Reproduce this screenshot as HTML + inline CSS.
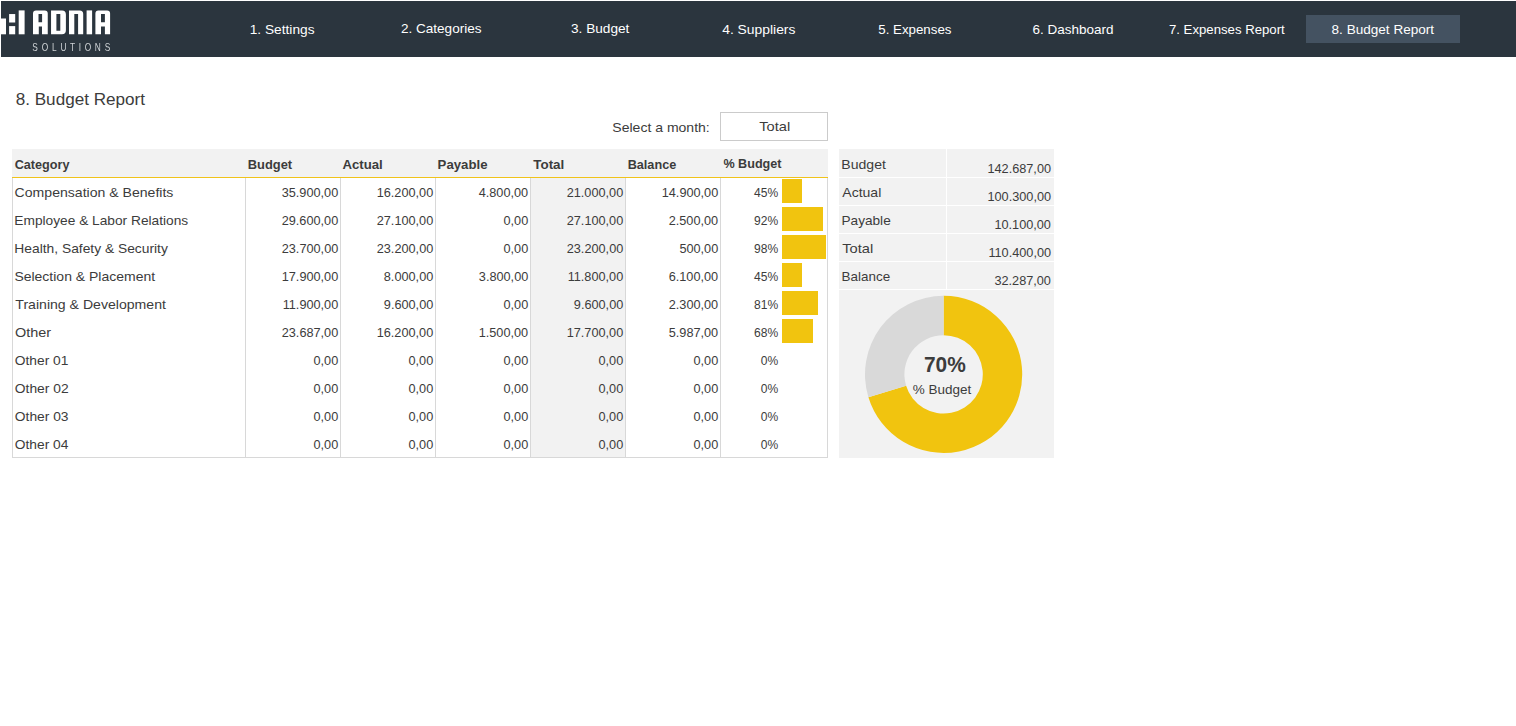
<!DOCTYPE html>
<html><head><meta charset="utf-8"><title>8. Budget Report</title>
<style>
html,body{margin:0;padding:0;background:#fff;}
body{width:1516px;height:726px;position:relative;overflow:hidden;font-family:"Liberation Sans",sans-serif;color:#3c3c3c;}
.b{position:absolute;}
.t{position:absolute;white-space:nowrap;line-height:1;}
.n{color:#fff;font-size:13.4px;}
.ti{font-size:16.8px;}
.x{font-size:13.4px;}
.x2{font-size:13.2px;}
.h{font-weight:bold;font-size:13.2px;}
.num{font-size:13.4px;}
.pct{font-size:13.4px;}
.big{font-weight:bold;font-size:22px;}
</style></head><body>
<div class="b" style="left:1px;top:1px;width:1515px;height:56px;background:#2b353e"></div>
<div class="b" style="left:1306px;top:15px;width:154px;height:28px;background:#445261"></div>
<svg class="b" style="left:0;top:0;will-change:transform" width="130" height="58" viewBox="0 0 130 58">
<g fill="#fff" fill-rule="evenodd">
<rect x="0" y="18.5" width="6" height="15.8"/>
<rect x="9.1" y="14.05" width="6.1" height="8.45"/>
<rect x="9.1" y="26.1" width="6.1" height="8.2"/>
<rect x="18.7" y="10.4" width="5.9" height="23.9"/>
<path d="M33 34.3V13.4Q33 10.4 36 10.4H44.75Q47.75 10.4 47.75 13.4V34.3H42V26.4H38.8V34.3ZM38.5 14.05H42.1V22.15H38.5Z"/>
<path d="M51.05 10.4H62Q65.9 10.4 65.9 14.4V30.3Q65.9 34.3 62 34.3H51.05ZM56.4 14.05H60.3V30.7H56.4Z"/>
<path d="M69 10.4H79.7Q83.2 10.4 83.2 13.9V34.3H78.1V14.05H74.3V34.3H69Z"/>
<rect x="86.6" y="10.4" width="5.5" height="23.9"/>
<path d="M95.4 34.3V13.4Q95.4 10.4 98.4 10.4H107.1Q110.1 10.4 110.1 13.4V34.3H104.9V26.5H101V34.3ZM101 14.05H104.9V22.15H101Z"/>
</g>
<g fill="#cfd3d6" font-family="Liberation Sans, sans-serif" font-size="11.6" text-anchor="middle" transform="scale(0.72 1)">
<text y="51" x="48.6 62.4 75.6 88.2 100.6 111 122.1 135.8 149.4">SOLUTIONS</text>
</g>
</svg>
<div class="b" style="left:720px;top:112px;width:106px;height:27px;border:1px solid #cbcbcb;background:#fff"></div>
<div class="b" style="left:12px;top:149px;width:816px;height:28px;background:#f2f2f2"></div>
<div class="b" style="left:531px;top:178px;width:94px;height:279px;background:#f2f2f2"></div>
<div class="b" style="left:12px;top:177px;width:816px;height:1px;background:#f0c31a"></div>
<div class="b" style="left:12px;top:178px;width:1px;height:280px;background:#d8d8d8"></div>
<div class="b" style="left:245px;top:178px;width:1px;height:280px;background:#d8d8d8"></div>
<div class="b" style="left:340px;top:178px;width:1px;height:280px;background:#d8d8d8"></div>
<div class="b" style="left:435px;top:178px;width:1px;height:280px;background:#d8d8d8"></div>
<div class="b" style="left:530px;top:178px;width:1px;height:280px;background:#d8d8d8"></div>
<div class="b" style="left:625px;top:178px;width:1px;height:280px;background:#d8d8d8"></div>
<div class="b" style="left:720px;top:178px;width:1px;height:280px;background:#d8d8d8"></div>
<div class="b" style="left:827px;top:178px;width:1px;height:280px;background:#d8d8d8"></div>
<div class="b" style="left:12px;top:457px;width:816px;height:1px;background:#d8d8d8"></div>
<div class="b" style="left:782px;top:179px;width:20px;height:24px;background:#f1c40f"></div>
<div class="b" style="left:782px;top:207px;width:41px;height:24px;background:#f1c40f"></div>
<div class="b" style="left:782px;top:235px;width:44px;height:24px;background:#f1c40f"></div>
<div class="b" style="left:782px;top:263px;width:20px;height:24px;background:#f1c40f"></div>
<div class="b" style="left:782px;top:291px;width:36px;height:24px;background:#f1c40f"></div>
<div class="b" style="left:782px;top:319px;width:31px;height:24px;background:#f1c40f"></div>
<div class="b" style="left:839px;top:149px;width:215px;height:309px;background:#f2f2f2"></div>
<div class="b" style="left:839px;top:177px;width:215px;height:1px;background:#fff"></div>
<div class="b" style="left:839px;top:205px;width:215px;height:1px;background:#fff"></div>
<div class="b" style="left:839px;top:233px;width:215px;height:1px;background:#fff"></div>
<div class="b" style="left:839px;top:261px;width:215px;height:1px;background:#fff"></div>
<div class="b" style="left:839px;top:289px;width:215px;height:1px;background:#fff"></div>
<div class="b" style="left:946px;top:149px;width:1px;height:141px;background:#fff"></div>
<svg class="b" style="left:839px;top:290px" width="215" height="168" viewBox="839 290 215 168">
<path d="M943.60 295.80 A78.60 78.60 0 1 1 868.41 397.30 L906.10 385.82 A39.20 39.20 0 1 0 943.60 335.20 Z" fill="#f1c40f"/>
<path d="M868.41 397.30 A78.60 78.60 0 0 1 943.60 295.80 L943.60 335.20 A39.20 39.20 0 0 0 906.10 385.82 Z" fill="#d9d9d9"/>
</svg>
<span class="t n" style="left:249px;top:23px;transform:translateX(0.74px) scaleX(1.0232);transform-origin:left center;">1. Settings</span>
<span class="t n" style="left:400px;top:22px;transform:translateX(0.96px) scaleX(1.0111);transform-origin:left center;">2. Categories</span>
<span class="t n" style="left:571px;top:22px;transform:translateX(0.02px) scaleX(1.0183);transform-origin:left center;">3. Budget</span>
<span class="t n" style="left:722px;top:23px;transform:translateX(0.18px) scaleX(1.0356);transform-origin:left center;">4. Suppliers</span>
<span class="t n" style="left:878px;top:23px;transform:translateX(0.26px) scaleX(0.9935);transform-origin:left center;">5. Expenses</span>
<span class="t n" style="left:1032px;top:23px;transform:translateX(0.59px) scaleX(1.0058);transform-origin:left center;">6. Dashboard</span>
<span class="t n" style="left:1168px;top:23px;transform:translateX(0.93px) scaleX(0.9846);transform-origin:left center;">7. Expenses Report</span>
<span class="t n" style="left:1331px;top:23px;transform:translateX(0.55px) scaleX(1.0129);transform-origin:left center;">8. Budget Report</span>
<span class="t ti" style="left:15px;top:92px;transform:translateX(0.68px) scaleX(1.0196);transform-origin:left center;">8. Budget Report</span>
<span class="t x" style="left:612px;top:121px;transform:translateX(0.35px) scaleX(1.0467);transform-origin:left center;">Select a month:</span>
<span class="t x" style="left:759px;top:120px;transform:translateX(0.30px) scaleX(1.0916);transform-origin:left center;">Total</span>
<span class="t h" style="left:14px;top:158px;transform:translateX(0.67px) scaleX(0.9600);transform-origin:left center;">Category</span>
<span class="t h" style="left:247px;top:158px;transform:translateX(0.71px) scaleX(0.9776);transform-origin:left center;">Budget</span>
<span class="t h" style="left:342px;top:158px;transform:translateX(0.43px) scaleX(1.0004);transform-origin:left center;">Actual</span>
<span class="t h" style="left:437px;top:158px;transform:translateX(0.57px) scaleX(1.0011);transform-origin:left center;">Payable</span>
<span class="t h" style="left:533px;top:158px;transform:translateX(0.24px) scaleX(1.0172);transform-origin:left center;">Total</span>
<span class="t h" style="left:627px;top:158px;transform:translateX(0.66px) scaleX(0.9605);transform-origin:left center;">Balance</span>
<span class="t h" style="left:723px;top:157px;transform:translateX(0.38px) scaleX(0.9556);transform-origin:left center;">% Budget</span>
<span class="t x" style="left:14px;top:186px;transform:translateX(0.60px) scaleX(1.0507);transform-origin:left center;">Compensation &amp; Benefits</span>
<span class="t num" style="right:1177px;top:186px;transform:translateX(-0.37px) scaleX(0.9490);transform-origin:right center;">35.900,00</span>
<span class="t num" style="right:1082px;top:186px;transform:translateX(-0.33px) scaleX(0.9490);transform-origin:right center;">16.200,00</span>
<span class="t num" style="right:987px;top:186px;transform:translateX(-0.99px) scaleX(0.9490);transform-origin:right center;">4.800,00</span>
<span class="t num" style="right:892px;top:186px;transform:translateX(-0.33px) scaleX(0.9490);transform-origin:right center;">21.000,00</span>
<span class="t num" style="right:797px;top:186px;transform:translateX(-0.32px) scaleX(0.9490);transform-origin:right center;">14.900,00</span>
<span class="t pct" style="right:737px;top:186px;transform:translateX(-0.63px) scaleX(0.9000);transform-origin:right center;">45%</span>
<span class="t x" style="left:14px;top:214px;transform:translateX(0.36px) scaleX(1.0242);transform-origin:left center;">Employee &amp; Labor Relations</span>
<span class="t num" style="right:1177px;top:214px;transform:translateX(-0.34px) scaleX(0.9490);transform-origin:right center;">29.600,00</span>
<span class="t num" style="right:1082px;top:214px;transform:translateX(-0.32px) scaleX(0.9490);transform-origin:right center;">27.100,00</span>
<span class="t num" style="right:987px;top:214px;transform:translateX(-0.84px) scaleX(0.9490);transform-origin:right center;">0,00</span>
<span class="t num" style="right:892px;top:214px;transform:translateX(-0.32px) scaleX(0.9490);transform-origin:right center;">27.100,00</span>
<span class="t num" style="right:797px;top:214px;transform:translateX(-0.95px) scaleX(0.9490);transform-origin:right center;">2.500,00</span>
<span class="t pct" style="right:737px;top:214px;transform:translateX(-0.63px) scaleX(0.9000);transform-origin:right center;">92%</span>
<span class="t x" style="left:14px;top:242px;transform:translateX(0.35px) scaleX(1.0308);transform-origin:left center;">Health, Safety &amp; Security</span>
<span class="t num" style="right:1177px;top:242px;transform:translateX(-0.31px) scaleX(0.9490);transform-origin:right center;">23.700,00</span>
<span class="t num" style="right:1082px;top:242px;transform:translateX(-0.31px) scaleX(0.9490);transform-origin:right center;">23.200,00</span>
<span class="t num" style="right:987px;top:242px;transform:translateX(-0.84px) scaleX(0.9490);transform-origin:right center;">0,00</span>
<span class="t num" style="right:892px;top:242px;transform:translateX(-0.31px) scaleX(0.9490);transform-origin:right center;">23.200,00</span>
<span class="t num" style="right:797px;top:242px;transform:translateX(-0.71px) scaleX(0.9490);transform-origin:right center;">500,00</span>
<span class="t pct" style="right:737px;top:242px;transform:translateX(-0.60px) scaleX(0.9000);transform-origin:right center;">98%</span>
<span class="t x" style="left:14px;top:270px;transform:translateX(0.38px) scaleX(1.0443);transform-origin:left center;">Selection &amp; Placement</span>
<span class="t num" style="right:1177px;top:270px;transform:translateX(-0.32px) scaleX(0.9490);transform-origin:right center;">17.900,00</span>
<span class="t num" style="right:1082px;top:270px;transform:translateX(-0.86px) scaleX(0.9490);transform-origin:right center;">8.000,00</span>
<span class="t num" style="right:987px;top:270px;transform:translateX(-0.85px) scaleX(0.9490);transform-origin:right center;">3.800,00</span>
<span class="t num" style="right:892px;top:270px;transform:translateX(-0.35px) scaleX(0.9490);transform-origin:right center;">11.800,00</span>
<span class="t num" style="right:797px;top:270px;transform:translateX(-0.95px) scaleX(0.9490);transform-origin:right center;">6.100,00</span>
<span class="t pct" style="right:737px;top:270px;transform:translateX(-0.63px) scaleX(0.9000);transform-origin:right center;">45%</span>
<span class="t x" style="left:15px;top:298px;transform:translateX(0.32px) scaleX(1.0518);transform-origin:left center;">Training &amp; Development</span>
<span class="t num" style="right:1177px;top:298px;transform:translateX(-0.33px) scaleX(0.9490);transform-origin:right center;">11.900,00</span>
<span class="t num" style="right:1082px;top:298px;transform:translateX(-0.85px) scaleX(0.9490);transform-origin:right center;">9.600,00</span>
<span class="t num" style="right:987px;top:298px;transform:translateX(-0.84px) scaleX(0.9490);transform-origin:right center;">0,00</span>
<span class="t num" style="right:892px;top:298px;transform:translateX(-0.85px) scaleX(0.9490);transform-origin:right center;">9.600,00</span>
<span class="t num" style="right:797px;top:298px;transform:translateX(-0.94px) scaleX(0.9490);transform-origin:right center;">2.300,00</span>
<span class="t pct" style="right:737px;top:298px;transform:translateX(-0.65px) scaleX(0.9000);transform-origin:right center;">81%</span>
<span class="t x" style="left:14px;top:326px;transform:translateX(0.91px) scaleX(1.0778);transform-origin:left center;">Other</span>
<span class="t num" style="right:1177px;top:326px;transform:translateX(-0.32px) scaleX(0.9490);transform-origin:right center;">23.687,00</span>
<span class="t num" style="right:1082px;top:326px;transform:translateX(-0.33px) scaleX(0.9490);transform-origin:right center;">16.200,00</span>
<span class="t num" style="right:987px;top:326px;transform:translateX(-0.95px) scaleX(0.9490);transform-origin:right center;">1.500,00</span>
<span class="t num" style="right:892px;top:326px;transform:translateX(-0.36px) scaleX(0.9490);transform-origin:right center;">17.700,00</span>
<span class="t num" style="right:797px;top:326px;transform:translateX(-0.94px) scaleX(0.9490);transform-origin:right center;">5.987,00</span>
<span class="t pct" style="right:737px;top:326px;transform:translateX(-0.57px) scaleX(0.9000);transform-origin:right center;">68%</span>
<span class="t x" style="left:14px;top:354px;transform:translateX(0.79px) scaleX(1.0294);transform-origin:left center;">Other 01</span>
<span class="t num" style="right:1177px;top:354px;transform:translateX(-0.84px) scaleX(0.9490);transform-origin:right center;">0,00</span>
<span class="t num" style="right:1082px;top:354px;transform:translateX(-0.84px) scaleX(0.9490);transform-origin:right center;">0,00</span>
<span class="t num" style="right:987px;top:354px;transform:translateX(-0.84px) scaleX(0.9490);transform-origin:right center;">0,00</span>
<span class="t num" style="right:892px;top:354px;transform:translateX(-0.84px) scaleX(0.9490);transform-origin:right center;">0,00</span>
<span class="t num" style="right:797px;top:354px;transform:translateX(-0.84px) scaleX(0.9490);transform-origin:right center;">0,00</span>
<span class="t pct" style="right:738px;top:354px;transform:translateX(-0.14px) scaleX(0.9000);transform-origin:right center;">0%</span>
<span class="t x" style="left:14px;top:382px;transform:translateX(0.80px) scaleX(1.0328);transform-origin:left center;">Other 02</span>
<span class="t num" style="right:1177px;top:382px;transform:translateX(-0.84px) scaleX(0.9490);transform-origin:right center;">0,00</span>
<span class="t num" style="right:1082px;top:382px;transform:translateX(-0.84px) scaleX(0.9490);transform-origin:right center;">0,00</span>
<span class="t num" style="right:987px;top:382px;transform:translateX(-0.84px) scaleX(0.9490);transform-origin:right center;">0,00</span>
<span class="t num" style="right:892px;top:382px;transform:translateX(-0.84px) scaleX(0.9490);transform-origin:right center;">0,00</span>
<span class="t num" style="right:797px;top:382px;transform:translateX(-0.84px) scaleX(0.9490);transform-origin:right center;">0,00</span>
<span class="t pct" style="right:738px;top:382px;transform:translateX(-0.14px) scaleX(0.9000);transform-origin:right center;">0%</span>
<span class="t x" style="left:14px;top:410px;transform:translateX(0.81px) scaleX(1.0314);transform-origin:left center;">Other 03</span>
<span class="t num" style="right:1177px;top:410px;transform:translateX(-0.84px) scaleX(0.9490);transform-origin:right center;">0,00</span>
<span class="t num" style="right:1082px;top:410px;transform:translateX(-0.84px) scaleX(0.9490);transform-origin:right center;">0,00</span>
<span class="t num" style="right:987px;top:410px;transform:translateX(-0.84px) scaleX(0.9490);transform-origin:right center;">0,00</span>
<span class="t num" style="right:892px;top:410px;transform:translateX(-0.84px) scaleX(0.9490);transform-origin:right center;">0,00</span>
<span class="t num" style="right:797px;top:410px;transform:translateX(-0.84px) scaleX(0.9490);transform-origin:right center;">0,00</span>
<span class="t pct" style="right:738px;top:410px;transform:translateX(-0.14px) scaleX(0.9000);transform-origin:right center;">0%</span>
<span class="t x" style="left:14px;top:438px;transform:translateX(0.79px) scaleX(1.0290);transform-origin:left center;">Other 04</span>
<span class="t num" style="right:1177px;top:438px;transform:translateX(-0.84px) scaleX(0.9490);transform-origin:right center;">0,00</span>
<span class="t num" style="right:1082px;top:438px;transform:translateX(-0.84px) scaleX(0.9490);transform-origin:right center;">0,00</span>
<span class="t num" style="right:987px;top:438px;transform:translateX(-0.84px) scaleX(0.9490);transform-origin:right center;">0,00</span>
<span class="t num" style="right:892px;top:438px;transform:translateX(-0.84px) scaleX(0.9490);transform-origin:right center;">0,00</span>
<span class="t num" style="right:797px;top:438px;transform:translateX(-0.84px) scaleX(0.9490);transform-origin:right center;">0,00</span>
<span class="t pct" style="right:738px;top:438px;transform:translateX(-0.14px) scaleX(0.9000);transform-origin:right center;">0%</span>
<span class="t x" style="left:841px;top:158px;transform:translateX(0.35px) scaleX(1.0499);transform-origin:left center;">Budget</span>
<span class="t num" style="right:464px;top:162px;transform:translateX(-0.98px) scaleX(0.9490);transform-origin:right center;">142.687,00</span>
<span class="t x" style="left:842px;top:186px;transform:translateX(0.27px) scaleX(1.0485);transform-origin:left center;">Actual</span>
<span class="t num" style="right:464px;top:190px;transform:translateX(-0.96px) scaleX(0.9490);transform-origin:right center;">100.300,00</span>
<span class="t x" style="left:841px;top:214px;transform:translateX(0.49px) scaleX(1.0170);transform-origin:left center;">Payable</span>
<span class="t num" style="right:464px;top:218px;transform:translateX(-0.63px) scaleX(0.9490);transform-origin:right center;">10.100,00</span>
<span class="t x" style="left:842px;top:242px;transform:translateX(0.22px) scaleX(1.0950);transform-origin:left center;">Total</span>
<span class="t num" style="right:464px;top:246px;transform:translateX(-0.96px) scaleX(0.9490);transform-origin:right center;">110.400,00</span>
<span class="t x" style="left:841px;top:270px;transform:translateX(0.58px) scaleX(1.0026);transform-origin:left center;">Balance</span>
<span class="t num" style="right:464px;top:274px;transform:translateX(-0.64px) scaleX(0.9490);transform-origin:right center;">32.287,00</span>
<span class="t big" style="left:923px;top:354px;transform:translateX(0.97px) scaleX(0.9491);transform-origin:left center;">70%</span>
<span class="t x2" style="left:912px;top:383px;transform:translateX(0.77px) scaleX(1.0219);transform-origin:left center;">% Budget</span>
</body></html>
